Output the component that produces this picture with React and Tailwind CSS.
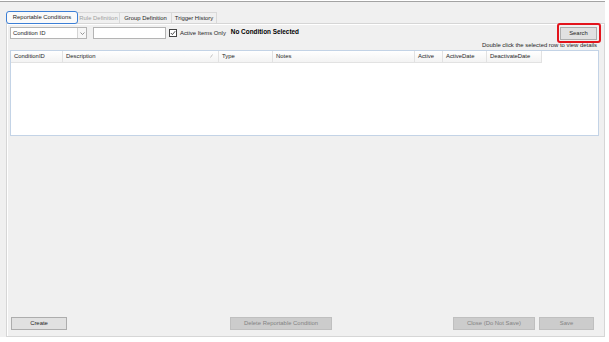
const TABS = [
  { label: 'Rule Definition', w: 'w-[43px]', disabled: true },
  { label: 'Group Definition', w: 'w-[53px]' },
  { label: 'Trigger History', w: 'w-[46px]' },
];

const COLUMNS = [
  { label: 'ConditionID', w: 'w-[52px]' },
  { label: 'Description', w: 'w-[156px]', sort: true },
  { label: 'Type', w: 'w-[54px]' },
  { label: 'Notes', w: 'w-[142px]' },
  { label: 'Active', w: 'w-[28px]' },
  { label: 'ActiveDate', w: 'w-[44px]' },
  { label: 'DeactivateDate', w: 'w-[55px]' },
];

function WinButton({ children, className = '', disabled }) {
  return (
    <button
      className={`h-[13px] border text-[5.9px] leading-none whitespace-nowrap ${
        disabled
          ? 'bg-[#cccccc] border-[#bfbfbf] text-[#838383]'
          : 'bg-[#e1e1e1] border-[#adadad] text-[#1e1e1e]'
      } ${className}`}
    >
      {children}
    </button>
  );
}

export default function App() {
  return (
    <div className="w-[609px] h-[342px] bg-white font-['Liberation_Sans',Arial,sans-serif] text-[5.9px] text-[#1e1e1e] whitespace-nowrap">
      <div className="w-[605px] h-[336px] mt-px bg-[#f0f0f0] border-t border-[#a3a3a3] flex flex-col">
        {/* Tab strip */}
        <div className="h-[21px] flex items-end pl-[6px]">
          <div className="w-[72px] h-[13px] bg-[#fafafa] border border-[#3c7fd6] rounded-[3px] flex items-center justify-center relative top-px">
            Reportable Conditions
          </div>
          {TABS.map(tab => (
            <div
              key={tab.label}
              className={`${tab.w} h-[11px] border border-b-0 border-[#d9d9d9] -ml-px first:ml-0 flex items-center justify-center ${
                tab.disabled ? 'text-[#a0a0a0]' : ''
              }`}
            >
              {tab.label}
            </div>
          ))}
        </div>

        {/* Tab page */}
        <div className="flex-1 ml-[6px] border border-[#d6d6d6] shadow-[inset_1px_1px_0_#fff] flex flex-col pl-[3px] pr-[5px] pt-[3px] pb-[6px]">
          {/* Filter row */}
          <div className="h-[13px] flex items-start">
            <div className="w-[77px] h-[12px] bg-white border border-[#b4b4b4] flex items-center">
              <span className="flex-1 pl-[2px]">Condition ID</span>
              <span className="w-[9px] h-full border-l border-[#d4d4d4] bg-[#f7f7f7] flex items-center justify-center">
                <svg width="5" height="3" viewBox="0 0 5 3">
                  <path d="M0.5 0.5 L2.5 2.5 L4.5 0.5" fill="none" stroke="#7a7a7a" strokeWidth="0.8" />
                </svg>
              </span>
            </div>
            <div className="w-[73px] h-[12px] ml-[6px] bg-white border border-[#b4b4b4]" />
            <div className="ml-[3px] mt-[2px] w-[8px] h-[8px] bg-white border border-[#444] flex items-center justify-center">
              <svg width="6" height="6" viewBox="0 0 6 6">
                <path d="M0.8 3 L2.4 4.6 L5.2 1.2" fill="none" stroke="#333" strokeWidth="0.9" />
              </svg>
            </div>
            <span className="ml-[3px] h-[12px] flex items-center">Active Items Only</span>
            <span className="ml-[5px] h-[9px] flex items-center font-bold text-[6.4px] text-black">No Condition Selected</span>
            <div className="ml-auto mr-[2px] relative">
              <WinButton className="w-[37px]">Search</WinButton>
              <div className="absolute -left-[3px] -top-[4px] -right-[4px] -bottom-[3px] border-2 border-[#e3141c] rounded-[3px]" />
            </div>
          </div>

          {/* Hint */}
          <div className="mt-[1px] h-[9px] flex items-center justify-end pr-[2px]">
            Double click the selected row to view details
          </div>

          {/* Grid */}
          <div className="h-[86px] bg-white border border-[#c3d3e6]">
            <div className="h-[12px] flex">
              {COLUMNS.map(col => (
                <div
                  key={col.label}
                  className={`${col.w} h-full flex items-center pl-[3px] border-r border-b border-[#e2e2e2] bg-gradient-to-b from-white to-[#f3f3f3] relative`}
                >
                  {col.label}
                  {col.sort && (
                    <svg className="absolute right-[5px] top-[3px]" width="3" height="4" viewBox="0 0 3 4">
                      <path d="M0.5 3.5 L2.5 0.5" stroke="#aaa" strokeWidth="0.7" />
                    </svg>
                  )}
                </div>
              ))}
            </div>
          </div>

          <div className="flex-1" />

          {/* Bottom actions */}
          <div className="flex">
            <WinButton className="ml-[1px] w-[56px]">Create</WinButton>
            <WinButton disabled className="ml-[163px] w-[102px]">Delete Reportable Condition</WinButton>
            <WinButton disabled className="ml-[121px] w-[82px]">Close (Do Not Save)</WinButton>
            <WinButton disabled className="ml-[4px] w-[55px]">Save</WinButton>
          </div>
        </div>
      </div>
    </div>
  );
}
